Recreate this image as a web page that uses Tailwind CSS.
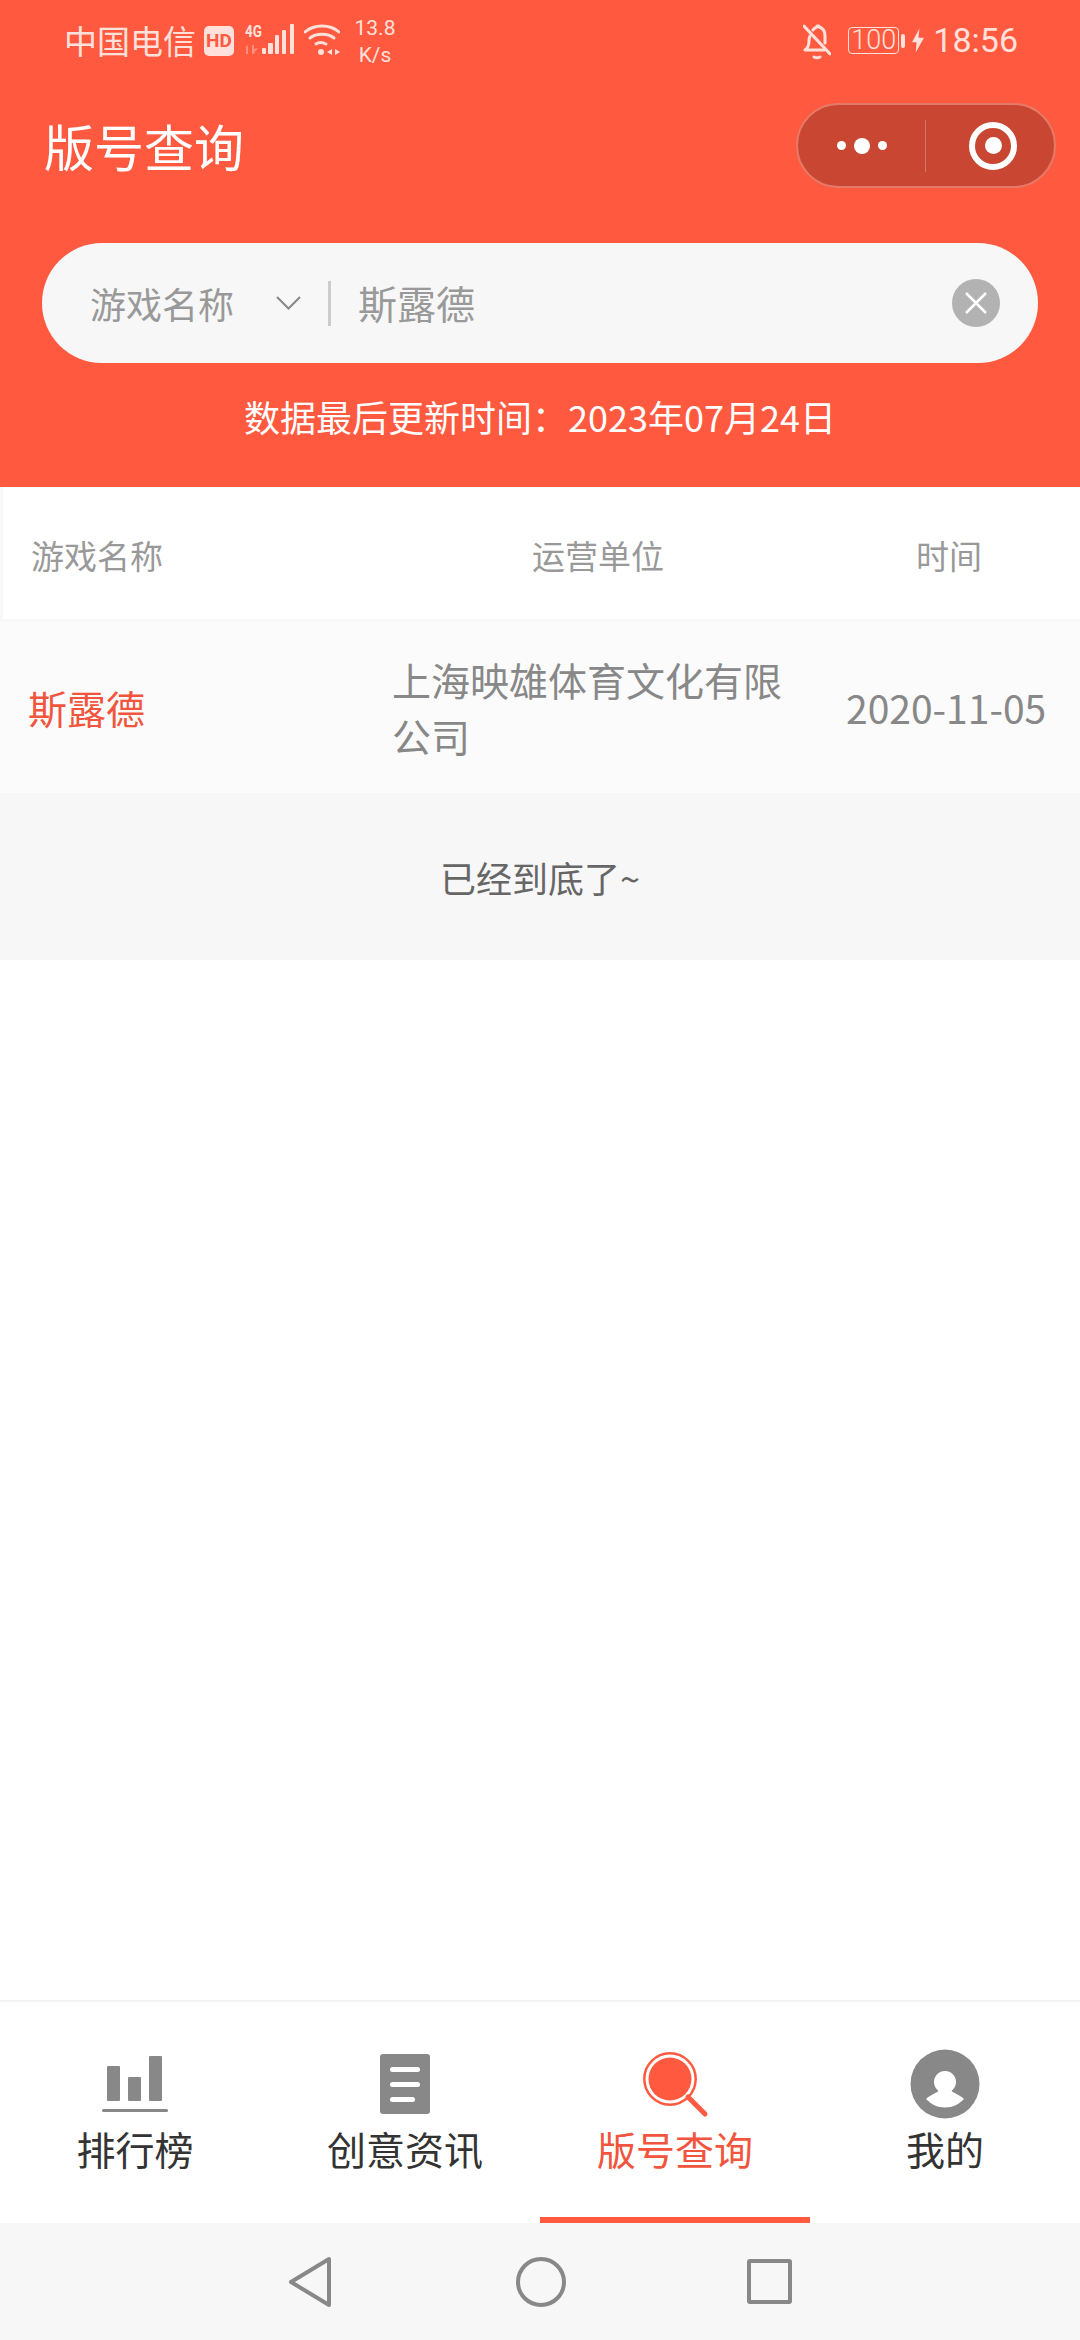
<!DOCTYPE html>
<html lang="zh">
<head>
    <meta charset="UTF-8">
    <meta name="viewport" content="width=device-width, initial-scale=1.0">
    <title>版号查询</title>
    <script src="https://cdn.jsdelivr.net/npm/@tailwindcss/browser@4"></script>
</head>
<body class="bg-white font-['Noto_Sans_CJK_SC','Noto_Sans',sans-serif]">
<div class="w-[1080px] h-[2340px] flex flex-col overflow-hidden">

    <!-- Red header -->
    <div class="h-[487px] shrink-0 bg-[#ff5a40] flex flex-col text-white">
        <!-- Status bar -->
        <div class="h-[84px] flex items-center justify-between pl-[64px] pr-[62px] text-[#ffe0da]">
            <div class="flex items-center">
                <span class="w-[133px] -mt-[3px] text-[33px] leading-none whitespace-nowrap">中国电信</span>
                <span class="ml-[7px] w-[30px] h-[30px] -mt-[2px] rounded-[5px] bg-[#ffe0da] text-[#ff5a40] text-[19px] font-bold leading-[30px] text-center font-['Roboto']">HD</span>
                <svg class="ml-[10px]" width="52" height="40" viewBox="0 0 52 40" fill="#ffe0da">
                    <text x="1" y="15" font-family="Roboto" font-size="16" font-weight="700" textLength="17" lengthAdjust="spacingAndGlyphs">4G</text>
                    <path d="M1 26l3-3v9H2v-6zM8 23h2v4l4-1-4 5v1H8z" opacity=".4"/>
                    <rect x="18" y="26" width="4" height="6" rx="1"/><rect x="24" y="21" width="5" height="11" rx="1"/><rect x="31" y="13" width="4" height="19" rx="1"/><rect x="38" y="8" width="4" height="24" rx="1"/><rect x="46" y="2" width="4" height="30" rx="1"/>
                </svg>
                <svg class="ml-[8px]" width="36" height="40" viewBox="0 0 36 40" fill="none" stroke="#ffe0da" stroke-width="3" stroke-linecap="round">
                    <path d="M1 10C10 2 26 2 35 10"/><path d="M6 16c6-5 18-5 24 0"/><path d="M12 22c3-2 6-2 10 0"/>
                    <circle cx="17" cy="30" r="3" fill="#ffe0da" stroke="none"/>
                    <path d="M28 27v6l-5-3zM31 27l5 3-5 3z" fill="#ffe0da" stroke="none"/>
                </svg>
                <div class="ml-[14px] w-[42px] flex flex-col items-center text-[21px] leading-[27px] font-['Roboto']">
                    <span>13.8</span>
                    <span>K/s</span>
                </div>
            </div>
            <div class="flex items-center">
                <svg width="28" height="40" viewBox="0 0 28 40" fill="none" stroke="#ffe0da" stroke-width="3" stroke-linecap="round" stroke-linejoin="round">
                    <path d="M1 4l26 28"/>
                    <path d="M7 14c-1 2-1 3-1 5 0 5-1 7-4 9h19M10 8c1-2 2-2 4-3v-1h2v1c4 1 6 4 6 9v7"/>
                    <path d="M11 35c2 1 4 1 6 0"/>
                </svg>
                <div class="ml-[17px] w-[51px] h-[27px] -mt-[3px] border-[1.5px] border-[#ffe0da] rounded-[4px] text-[27px] leading-[24px] text-center font-['Roboto'] font-light">100</div>
                <div class="ml-[2px] -mt-[3px] w-[4px] h-[14px] rounded-[2px] bg-[#ffe0da]"></div>
                <svg class="ml-[7px] -mt-[3px]" width="12" height="25" viewBox="0 0 13 26" fill="#ffe0da"><path d="M8 0L0 15h5l-1 11 9-16H7z"/></svg>
                <span class="ml-[9px] -mt-[5px] text-[34px] leading-none font-['Roboto']">18:56</span>
            </div>
        </div>
        <!-- Title bar -->
        <div class="h-[123px] flex items-center justify-between pl-[44px] pr-[24px]">
            <span class="text-[50px] leading-none -mt-[2px]">版号查询</span>
            <div class="w-[260px] h-[85px] rounded-full bg-[#c94732] border-2 border-[#e57a68] flex items-center">
                <div class="w-[127px] flex items-center justify-center gap-[8px]">
                    <span class="w-[9px] h-[9px] rounded-full bg-white"></span>
                    <span class="w-[16px] h-[16px] rounded-full bg-white"></span>
                    <span class="w-[9px] h-[9px] rounded-full bg-white"></span>
                </div>
                <div class="w-px h-[52px] bg-white/25"></div>
                <div class="flex-1 flex justify-center pl-[6px]">
                    <div class="w-[48px] h-[48px] rounded-full border-[6px] border-white flex items-center justify-center">
                        <span class="w-[17px] h-[17px] rounded-full bg-white"></span>
                    </div>
                </div>
            </div>
        </div>
        <!-- Search box -->
        <div class="mt-[36px] mx-[42px] h-[120px] rounded-full bg-[#f7f7f7] flex items-center pl-[48px] pr-[38px] text-[#999]">
            <span class="text-[36px]">游戏名称</span>
            <svg class="ml-[42px]" width="25" height="14" viewBox="0 0 25 14" fill="none" stroke="#888" stroke-width="2"><path d="M1 1l11.500 11.500L24 1"/></svg>
            <div class="ml-[27px] w-[3px] h-[45px] bg-[#ccc]"></div>
            <span class="ml-[27px] flex-1 text-[39px] -mt-[2px]">斯露德</span>
            <div class="w-[48px] h-[48px] rounded-full bg-[#b2b2b2] flex items-center justify-center">
                <svg width="24" height="24" viewBox="0 0 24 24" stroke="#fff" stroke-width="2.500"><path d="M2 2l20 20M22 2L2 22"/></svg>
            </div>
        </div>
        <div class="mt-[28px] text-center text-[36px] leading-[50px] text-white">数据最后更新时间：2023年07月24日</div>
    </div>

    <!-- Table -->
    <div class="h-[135px] shrink-0 bg-white border-l-[3px] border-b-[3px] border-[#f8f8f8] flex items-center pt-[5px] text-[33px] text-[#999]">
        <span class="w-[501px] pl-[28px]">游戏名称</span>
        <span class="w-[384px] ml-[28px]">运营单位</span>
        <span>时间</span>
    </div>
    <div class="h-[171px] shrink-0 bg-[#fbfbfb] flex items-center text-[#888]">
        <span class="w-[392px] pl-[28px] text-[39px] text-[#f2553d]">斯露德</span>
        <span class="w-[400px] text-[39px] leading-[56px] -mt-[2px]">上海映雄体育文化有限公司</span>
        <span class="ml-[54px] text-[39px]">2020-11-05</span>
    </div>
    <div class="h-[167px] shrink-0 bg-[#f7f7f7] flex items-center justify-center text-[36px] text-[#666]">已经到底了~</div>

    <div class="flex-1"></div>

    <!-- Tab bar -->
    <div class="h-[223px] shrink-0 bg-white border-t-2 border-[#f4f4f4] grid grid-cols-4 text-[39px] text-[#333] leading-none">
        <div class="flex flex-col items-center pt-[47px]">
            <svg width="72" height="70" viewBox="0 0 72 70" fill="#888">
                <rect x="8" y="17" width="13" height="35" rx="1"/><rect x="29" y="28" width="13" height="24" rx="1"/><rect x="50" y="7" width="13" height="45" rx="1"/>
                <rect x="3" y="60" width="66" height="3" rx="1.500"/>
            </svg>
            <span class="mt-[10px]">排行榜</span>
        </div>
        <div class="flex flex-col items-center pt-[47px]">
            <svg width="72" height="70" viewBox="0 0 72 70" fill="#888">
                <rect x="11" y="5" width="50" height="60" rx="3"/>
                <rect x="21" y="18" width="30" height="5" rx="2.500" fill="#fff"/><rect x="21" y="33" width="30" height="5" rx="2.500" fill="#fff"/><rect x="21" y="48" width="25" height="5" rx="2.500" fill="#fff"/>
            </svg>
            <span class="mt-[10px]">创意资讯</span>
        </div>
        <div class="relative flex flex-col items-center pt-[47px] text-[#f2553d]">
            <svg width="72" height="70" viewBox="0 0 72 70" fill="none">
                <circle cx="31" cy="30" r="25.700" stroke="#ff5a40" stroke-width="2.500"/>
                <circle cx="31" cy="30" r="21.500" fill="#ff5a40"/>
                <path d="M49 48l17 17" stroke="#ff5a40" stroke-width="5" stroke-linecap="round"/>
            </svg>
            <span class="mt-[10px]">版号查询</span>
            <div class="absolute left-0 right-0 bottom-0 h-[6px] bg-[#ff5a40]"></div>
        </div>
        <div class="flex flex-col items-center pt-[47px]">
            <svg width="72" height="70" viewBox="0 0 72 70">
                <circle cx="36" cy="35" r="34.500" fill="#888"/>
                <circle cx="36" cy="33" r="11" fill="#fff"/>
                <path d="M17 50c5-5 12-6 13-9h12c1 3 8 4 13 9-5 5-11 8.500-19 8.500s-14-3.500-19-8.500z" fill="#fff"/>
            </svg>
            <span class="mt-[10px]">我的</span>
        </div>
    </div>

    <!-- Android nav bar -->
    <div class="h-[117px] shrink-0 bg-[#f7f7f7] flex items-center justify-center">
        <svg width="44" height="52" viewBox="0 0 44 52" fill="none" stroke="#888" stroke-width="4" stroke-linejoin="round"><path d="M41 3v46L3 26z"/></svg>
        <div class="ml-[184px] w-[50px] h-[50px] rounded-full border-[4px] border-[#888]"></div>
        <div class="ml-[181px] w-[45px] h-[45px] rounded-[3px] border-[4px] border-[#888]"></div>
    </div>
</div>
</body>
</html>
